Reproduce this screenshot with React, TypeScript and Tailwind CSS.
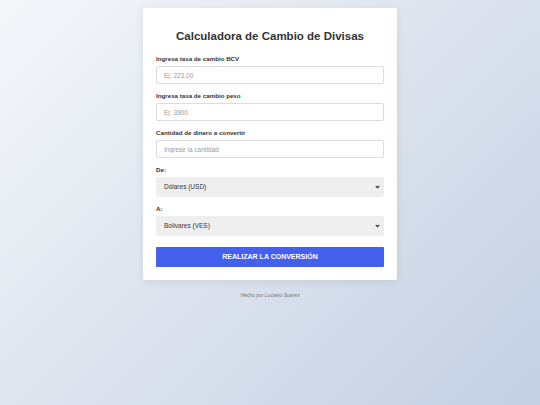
import { useState } from 'react'

const FONT = { fontFamily: '"Liberation Sans", Arial, sans-serif' }

function Campo({ label, placeholder }: { label: string; placeholder: string }) {
  return (
    <div className="mb-[7px]">
      <label className="block text-[6.2px] leading-[9px] font-bold text-[#333] mb-[3px]">{label}</label>
      <input
        type="text"
        placeholder={placeholder}
        className="block w-full h-[18px] px-[7px] border border-[#ddd] rounded-[2px] bg-white text-[6.5px] text-[#333] placeholder:text-[#9a9a9a] outline-none"
      />
    </div>
  )
}

function Selector({
  label,
  value,
  onChange,
  opciones,
  className,
}: {
  label: string
  value: string
  onChange: (v: string) => void
  opciones: { id: string; label: string }[]
  className: string
}) {
  return (
    <div className={className}>
      <label className="block text-[6.2px] leading-[9px] font-bold text-[#333] mb-[3px]">{label}</label>
      <div className="relative">
        <select
          value={value}
          onChange={e => onChange(e.target.value)}
          className="block w-full h-[20px] pl-[8px] pr-[14px] rounded-[2px] bg-[#efefef] text-[6.5px] text-[#333] outline-none appearance-none"
        >
          {opciones.map(o => (
            <option key={o.id} value={o.id}>{o.label}</option>
          ))}
        </select>
        <svg
          className="absolute right-[4px] top-[8px] pointer-events-none"
          width="5"
          height="4"
          viewBox="0 0 5 4"
        >
          <path d="M0.8 1 L2.5 2.7 L4.2 1" fill="none" stroke="#333" strokeWidth="1.1" />
        </svg>
      </div>
    </div>
  )
}

export default function App() {
  const [de, setDe] = useState('USD')
  const [a, setA] = useState('VES')

  return (
    <div
      className="min-h-[405px] w-full bg-[linear-gradient(135deg,#f5f7fa_0%,#c3cfe2_100%)] pt-[8px]"
      style={FONT}
    >
      <div className="mx-auto w-[254px] bg-white rounded-[2px] shadow-[0_2px_8px_rgba(0,0,0,0.08)] px-[13px] pt-[21px] pb-[13px]">
        <h1 className="text-center text-[11.5px] leading-[14px] font-bold text-[#333] mb-[11px]">
          Calculadora de Cambio de Divisas
        </h1>

        <Campo label="Ingresa tasa de cambio BCV" placeholder="Ej: 223,00" />
        <Campo label="Ingresa tasa de cambio peso" placeholder="Ej: 3900" />
        <Campo label="Cantidad de dinero a convertir" placeholder="Ingrese la cantidad" />

        <Selector
          label="De:"
          value={de}
          onChange={setDe}
          className="mb-[7px]"
          opciones={[
            { id: 'USD', label: 'Dólares (USD)' },
            { id: 'VES', label: 'Bolivares (VES)' },
            { id: 'COP', label: 'Pesos (COP)' },
          ]}
        />

        <Selector
          label="A:"
          value={a}
          onChange={setA}
          className="mb-[11px]"
          opciones={[
            { id: 'VES', label: 'Bolivares (VES)' },
            { id: 'USD', label: 'Dólares (USD)' },
            { id: 'COP', label: 'Pesos (COP)' },
          ]}
        />

        <button
          type="button"
          className="block w-full h-[20px] bg-[#4361ee] text-white text-[7px] font-bold rounded-[1px]"
        >
          REALIZAR LA CONVERSIÓN
        </button>
      </div>

      <p className="mt-[12px] text-center text-[5px] leading-[6px] italic text-[#777]">Hecho por Luciano Suarez</p>
    </div>
  )
}
